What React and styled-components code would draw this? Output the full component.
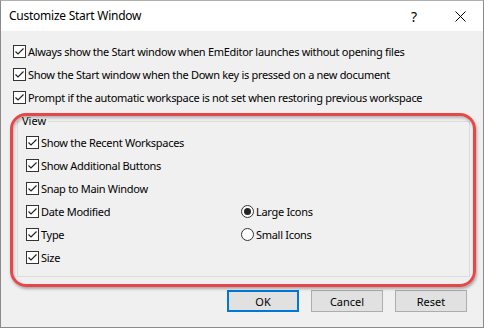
import React from 'react'
import styled, { createGlobalStyle } from 'styled-components'

const Global = createGlobalStyle`
  html, body { margin: 0; padding: 0; background: #fff; }
  body { font-family: "Noto Sans", "Open Sans", sans-serif; font-size: 11px; color: #000; }
`

const Window = styled.div`
  position: relative;
  width: 484px;
  height: 328px;
  box-sizing: border-box;
  border: 1px solid #8a8a8a;
  border-top-color: #b0b0b0;
  background: #f0f0f0;
  display: flex;
  flex-direction: column;
  overflow: hidden;
`

const TitleBar = styled.div`
  height: 30px;
  background: #fff;
  display: flex;
  align-items: center;
  padding-left: 8px;
  font-size: 12px;
  letter-spacing: -0.25px;
`

const Title = styled.div`
  flex: 1;
  padding-bottom: 1px;
`

const TitleButton = styled.div`
  width: 46px;
  height: 30px;
  display: flex;
  align-items: center;
  justify-content: center;
  font-size: 14px;
  color: #000;
`

const Body = styled.div`
  flex: 1;
  padding: 9px 12px 0 12px;
  display: flex;
  flex-direction: column;
`

const Row = styled.label`
  display: flex;
  align-items: center;
  gap: 2px;
  height: 23px;
  white-space: nowrap;
  letter-spacing: -0.3px;
`

const Box = styled.span`
  width: 13px;
  height: 13px;
  box-sizing: border-box;
  border: 1px solid #333;
  background: #fff;
  display: flex;
  align-items: center;
  justify-content: center;
  flex: none;
`

const Radio = styled.span`
  width: 13px;
  height: 13px;
  box-sizing: border-box;
  border: 1px solid #333;
  border-radius: 50%;
  background: #fff;
  display: flex;
  align-items: center;
  justify-content: center;
  flex: none;
  &::after {
    content: '';
    display: ${p => (p.$on ? 'block' : 'none')};
    width: 7px;
    height: 7px;
    border-radius: 50%;
    background: #222;
  }
`

const Group = styled.fieldset`
  margin: 5px 1px 0 4px;
  padding: 3px 8px 0 8px;
  border: 1px solid #dcdcdc;
  border-radius: 0;
  min-width: 0;
  height: 163px;
  box-sizing: border-box;
  display: grid;
  grid-template-columns: 215px 1fr;
  grid-auto-rows: 23px;
  align-content: start;
  legend {
    padding: 0 2px;
    margin-left: -6px;
    font-size: 11px;
    line-height: 14px;
  }
`

const Buttons = styled.div`
  display: flex;
  justify-content: flex-end;
  gap: 12px;
  padding: 13px 4px 0 0;
`

const Button = styled.button`
  width: 72px;
  height: 22px;
  box-sizing: border-box;
  font-family: inherit;
  font-size: 11px;
  background: #e1e1e1;
  border: ${p => (p.$default ? '2px solid #0078d7' : '1px solid #adadad')};
  padding: 0;
  color: #000;
`

const Highlight = styled.div`
  position: absolute;
  left: 9px;
  top: 112px;
  width: 466px;
  height: 174px;
  box-sizing: border-box;
  border: 3px solid #e8474a;
  border-radius: 16px;
  box-shadow: 1px 2px 3px rgba(0, 0, 0, 0.3), inset 1px 2px 3px rgba(0, 0, 0, 0.25);
  pointer-events: none;
`

const Check = () => (
  <svg width="11" height="11" viewBox="0 0 11 11">
    <path d="M1.5 5.5 L4 8 L9.5 2.5" fill="none" stroke="#222" strokeWidth="1.2" />
  </svg>
)

const CheckRow = ({ children }) => (
  <Row>
    <Box><Check /></Box>
    {children}
  </Row>
)

const RadioRow = ({ on, children }) => (
  <Row>
    <Radio $on={on} />
    {children}
  </Row>
)

export default function App() {
  return (
    <>
      <Global />
      <Window>
        <TitleBar>
          <Title>Customize Start Window</Title>
          <TitleButton>?</TitleButton>
          <TitleButton>
            <svg width="11" height="11" viewBox="0 0 11 11">
              <path d="M0.5 0.5 L10.5 10.5 M10.5 0.5 L0.5 10.5" stroke="#000" strokeWidth="1" />
            </svg>
          </TitleButton>
        </TitleBar>
        <Body>
          <CheckRow>Always show the Start window when EmEditor launches without opening files</CheckRow>
          <CheckRow>Show the Start window when the Down key is pressed on a new document</CheckRow>
          <CheckRow>Prompt if the automatic workspace is not set when restoring previous workspace</CheckRow>
          <Group>
            <legend>View</legend>
            <CheckRow>Show the Recent Workspaces</CheckRow>
            <span />
            <CheckRow>Show Additional Buttons</CheckRow>
            <span />
            <CheckRow>Snap to Main Window</CheckRow>
            <span />
            <CheckRow>Date Modified</CheckRow>
            <RadioRow on>Large Icons</RadioRow>
            <CheckRow>Type</CheckRow>
            <RadioRow>Small Icons</RadioRow>
            <CheckRow>Size</CheckRow>
          </Group>
          <Buttons>
            <Button $default>OK</Button>
            <Button>Cancel</Button>
            <Button>Reset</Button>
          </Buttons>
        </Body>
        <Highlight />
      </Window>
    </>
  )
}
